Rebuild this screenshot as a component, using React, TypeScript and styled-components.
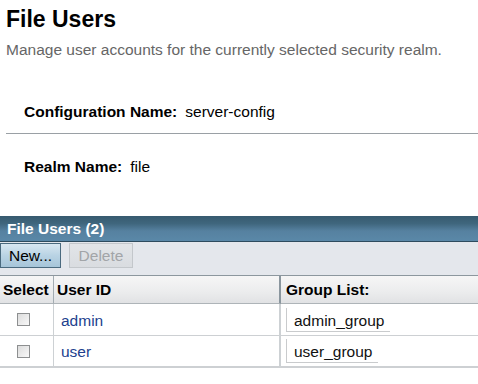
import styled, { createGlobalStyle } from "styled-components"

const GlobalStyle = createGlobalStyle`
  body {
    margin: 0;
    background: #fff;
    font-family: "Liberation Sans", Arial, sans-serif;
    font-size: 15.5px;
    color: #000;
  }
  * { box-sizing: border-box; }
`

const PageHeader = styled.div`
  padding: 5px 6px 0 6px;
`

const Title = styled.h1`
  margin: 0;
  font-size: 23px;
  line-height: 28px;
  font-weight: bold;
  color: #000;
`

const Subtitle = styled.div`
  margin-top: 8px;
  line-height: 18px;
  color: #666;
`

const PropList = styled.div`
  margin-top: 20px;
  margin-bottom: 27px;
`

const PropRow = styled.div<{ $divider?: boolean }>`
  display: flex;
  margin-left: 6px;
  padding: 24px 0 12px 18px;
  line-height: 18px;
  border-bottom: 1px solid ${(p) => (p.$divider ? "#9aa0a5" : "transparent")};
`

const PropLabel = styled.span`
  font-weight: bold;
  margin-right: 8px;
`

const PropValue = styled.span`
  color: #000;
`

const TitleBar = styled.div`
  height: 26px;
  padding: 1px 0 0 7px;
  line-height: 24px;
  font-weight: bold;
  color: #fff;
  background: linear-gradient(to bottom, #375a6f 0%, #3f667d 30%, #5681a0 60%, #5a88a8 100%);
  border-bottom: 1px solid #2e4b5e;
`

const Toolbar = styled.div`
  display: flex;
  gap: 8px;
  height: 34px;
  padding-top: 1px;
  background: #e4e7ec;
  border-bottom: 1px solid #8c979e;
`

const Button = styled.button<{ $disabled?: boolean; $w: number }>`
  width: ${(p) => p.$w}px;
  height: 25px;
  padding: 0;
  font-family: inherit;
  font-size: 15.5px;
  line-height: 23px;
  text-align: center;
  color: ${(p) => (p.$disabled ? "#a2a5a8" : "#000")};
  border: 1px solid ${(p) => (p.$disabled ? "#c3c7cb" : "#4a6a7f")};
  background: ${(p) =>
    p.$disabled
      ? "linear-gradient(to bottom, #e2e5e8, #d9dce0)"
      : "linear-gradient(to bottom, #d8e7f1, #b9d3e4 50%, #a6c5d9)"};
`

const Table = styled.table`
  width: 478px;
  table-layout: fixed;
  border-collapse: separate;
  border-spacing: 0;
`

const HeadCell = styled.th<{ $w: number; $thick?: boolean; $last?: boolean }>`
  width: ${(p) => p.$w}px;
  height: 28px;
  padding: 0 0 0 ${(p) => (p.$last ? 5 : 3)}px;
  text-align: left;
  font-weight: bold;
  vertical-align: middle;
  background: linear-gradient(to bottom, #f6f6f6, #ebeced 60%, #e1e2e4);
  border-bottom: 1px solid #aeb4b8;
  border-right: ${(p) => (p.$last ? "none" : p.$thick ? "2px solid #8a969e" : "1px solid #a3acb2")};
`

const Cell = styled.td<{ $thick?: boolean; $last?: boolean; $pad?: number }>`
  height: 32px;
  padding: 2px 0 0 ${(p) => p.$pad ?? 0}px;
  vertical-align: middle;
  border-bottom: 1px solid #cdd0d3;
  border-right: ${(p) => (p.$last ? "none" : p.$thick ? "2px solid #cdd1d4" : "1px solid #cdd1d4")};
  tr:last-child & {
    border-bottom: 2px solid #cdd0d3;
  }
`

const Check = styled.input`
  appearance: none;
  display: block;
  width: 13px;
  height: 13px;
  margin: -2px 0 0 0;
  border: 1px solid #8d8f90;
  background: linear-gradient(135deg, #dcdcdc, #f8f8f8);
`

const Link = styled.a`
  color: #223f8e;
  text-decoration: none;
`

const GroupBox = styled.span`
  display: inline-block;
  height: 24px;
  margin-top: -2px;
  padding: 0 6px 0 7px;
  line-height: 25px;
  color: #111;
  border-left: 1px solid #c9cbcd;
  border-bottom: 1px solid #c9cbcd;
`

const users = [
  { id: "admin", groups: "admin_group" },
  { id: "user", groups: "user_group" },
]

export default function App() {
  return (
    <>
      <GlobalStyle />
      <PageHeader>
        <Title>File Users</Title>
        <Subtitle>Manage user accounts for the currently selected security realm.</Subtitle>
      </PageHeader>
      <PropList>
        <PropRow $divider>
          <PropLabel>Configuration Name:</PropLabel>
          <PropValue>server-config</PropValue>
        </PropRow>
        <PropRow>
          <PropLabel>Realm Name:</PropLabel>
          <PropValue>file</PropValue>
        </PropRow>
      </PropList>
      <TitleBar>File Users (2)</TitleBar>
      <Toolbar>
        <Button $w={61}>New...</Button>
        <Button $w={64} $disabled disabled>
          Delete
        </Button>
      </Toolbar>
      <Table>
        <thead>
          <tr>
            <HeadCell $w={54}>Select</HeadCell>
            <HeadCell $w={227} $thick>
              User ID
            </HeadCell>
            <HeadCell $w={197} $last>
              Group List:
            </HeadCell>
          </tr>
        </thead>
        <tbody>
          {users.map((u) => (
            <tr key={u.id}>
              <Cell $pad={17}>
                <Check type="checkbox" />
              </Cell>
              <Cell $pad={7} $thick>
                <Link href="#">{u.id}</Link>
              </Cell>
              <Cell $pad={5} $last>
                <GroupBox>{u.groups}</GroupBox>
              </Cell>
            </tr>
          ))}
        </tbody>
      </Table>
    </>
  )
}
